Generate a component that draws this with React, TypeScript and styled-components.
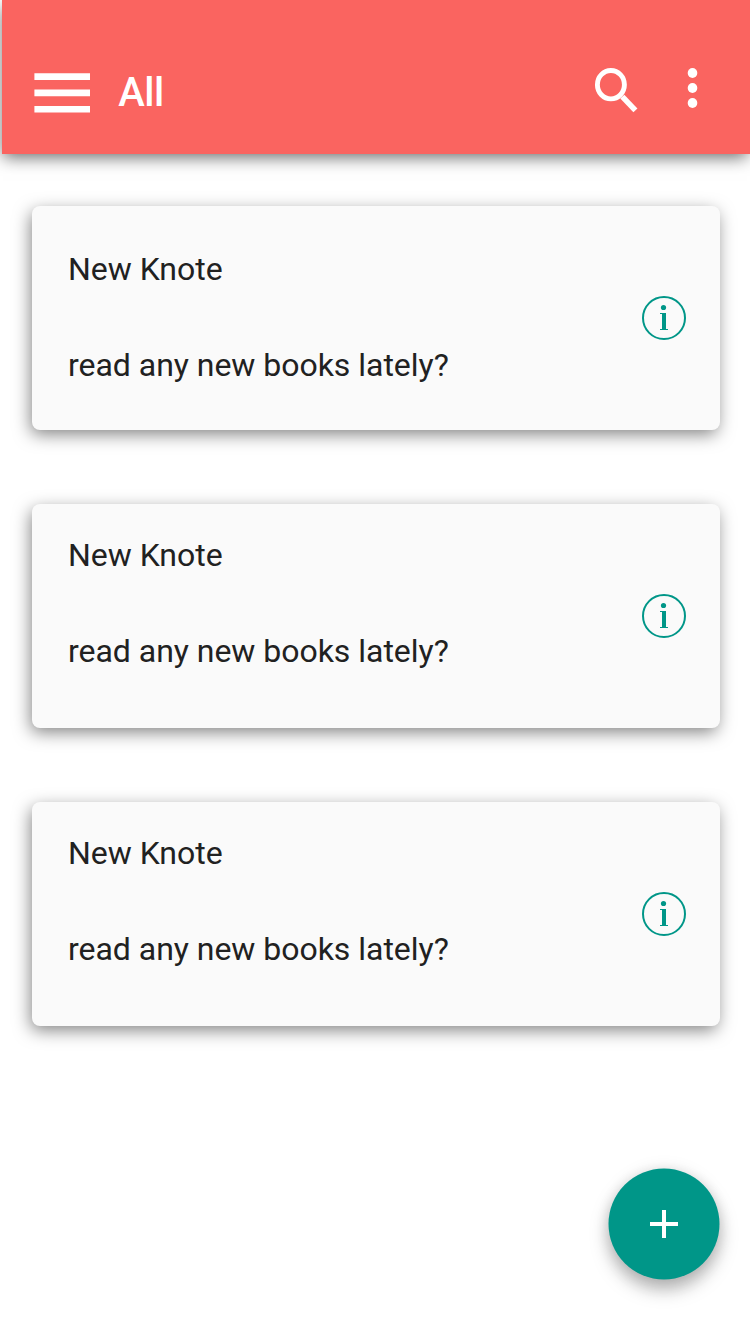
import React from "react";
import styled, { createGlobalStyle } from "styled-components";

const GlobalStyle = createGlobalStyle`
  * { box-sizing: border-box; }
  body { margin: 0; background: #fff; font-family: Roboto, sans-serif; }
`;

const Screen = styled.div`
  width: 750px;
  height: 1334px;
  overflow: hidden;
  display: flex;
  flex-direction: column;
  background: #fff;
`;

const AppBar = styled.header`
  flex: none;
  height: 154px;
  margin-left: 2px;
  padding: 60px 52px 30px 32px;
  display: flex;
  align-items: center;
  background: #fa6460;
  color: #fff;
  box-shadow: -1px 5px 16px -2px rgba(0, 0, 0, 0.6);
`;

const Title = styled.h1`
  flex: 1;
  margin: 2px 0 0 28.2px;
  font-size: 40px;
  font-weight: 500;
  line-height: 64px;
  letter-spacing: -0.5px;
`;

const IconButton = styled.button<{ $gap?: number; $lift?: number }>`
  display: flex;
  margin: 0 0 ${(p) => p.$lift ?? 0}px ${(p) => p.$gap ?? 0}px;
  padding: 0;
  border: 0;
  background: none;
  color: inherit;
`;

const NoteList = styled.main`
  flex: 1;
  display: flex;
  flex-direction: column;
  gap: 74px;
  padding: 52px 30px 0 32px;
`;

const NoteCard = styled.article<{ $top: number }>`
  display: flex;
  justify-content: space-between;
  height: 224px;
  padding: ${(p) => p.$top}px 34px 0 36px;
  border-radius: 8px;
  background: #fafafa;
  color: #212121;
  box-shadow: -2px 5px 17px -1px rgba(0, 0, 0, 0.5);
`;

const NoteText = styled.div`
  font-size: 32px;
  line-height: 48px;
  letter-spacing: -0.03px;
`;

const Line = styled.p`
  margin: 0 0 48px;
`;

const InfoSlot = styled.div<{ $top: number }>`
  margin-top: ${(p) => 90 - p.$top}px;
  color: #009688;
`;

const BottomBar = styled.footer`
  flex: none;
  display: flex;
  justify-content: flex-end;
  padding: 0 30px 54px 0;
`;

const AddButton = styled.button`
  display: flex;
  width: 112px;
  height: 112px;
  padding: 0;
  border: 0;
  border-radius: 50%;
  background: none;
  color: #009688;
  filter: drop-shadow(0 10px 9px rgba(0, 0, 0, 0.28)) drop-shadow(0 0 7px rgba(0, 0, 0, 0.1));
`;

const MenuIcon = () => (
  <svg width="56" height="40" viewBox="0 0 56 40" fill="currentColor" overflow="visible">
    <path d="M.4 1.3H56V8H.4zM.4 17.4H56v6.8H.4zM.4 34H56v6.6H.4z" />
  </svg>
);

const SearchIcon = () => (
  <svg width="44" height="46" viewBox="0 0 44 46" fill="none" stroke="currentColor">
    <ellipse cx="16.9" cy="17.7" rx="13.5" ry="14.2" strokeWidth="4.9" />
    <path d="M28.3 29.6L41.4 43.4" strokeWidth="5.6" />
  </svg>
);

const MoreIcon = () => (
  <svg width="12" height="42" viewBox="0 0 12 42" fill="currentColor">
    <ellipse cx="6.5" cy="6" rx="4.8" ry="5" />
    <ellipse cx="6.5" cy="21" rx="4.8" ry="5" />
    <ellipse cx="6.5" cy="36" rx="4.8" ry="5" />
  </svg>
);

const InfoIcon = () => (
  <svg width="44" height="44" viewBox="0 0 44 44" fill="currentColor" display="block">
    <circle cx="22" cy="22" r="21" fill="none" stroke="currentColor" strokeWidth="2" />
    <circle cx="21.5" cy="11.5" r="2.6" />
    <path d="M18 17h6v16h2v1h-8v-1h2V18h-2z" />
  </svg>
);

const AddIcon = () => (
  <svg width="112" height="112" viewBox="0 0 112 112" fill="currentColor">
    <circle cx="56" cy="56" r="55.5" />
    <path d="M54 42h4v12h12v4H58v12h-4V58H42v-4h12z" fill="#fff" />
  </svg>
);

const notes = [
  { title: "New Knote", body: "read any new books lately?", top: 39 },
  { title: "New Knote", body: "read any new books lately?", top: 27 },
  { title: "New Knote", body: "read any new books lately?", top: 27 },
];

export default function App() {
  return (
    <>
      <GlobalStyle />
      <Screen>
        <AppBar>
          <IconButton aria-label="Menu"><MenuIcon /></IconButton>
          <Title>All</Title>
          <IconButton aria-label="Search" $lift={4}><SearchIcon /></IconButton>
          <IconButton aria-label="More" $gap={48} $lift={8}><MoreIcon /></IconButton>
        </AppBar>
        <NoteList>
          {notes.map((note, i) => (
            <NoteCard key={i} $top={note.top}>
              <NoteText>
                <Line>{note.title}</Line>
                <Line>{note.body}</Line>
              </NoteText>
              <InfoSlot $top={note.top}><InfoIcon /></InfoSlot>
            </NoteCard>
          ))}
        </NoteList>
        <BottomBar>
          <AddButton aria-label="Add note"><AddIcon /></AddButton>
        </BottomBar>
      </Screen>
    </>
  );
}
